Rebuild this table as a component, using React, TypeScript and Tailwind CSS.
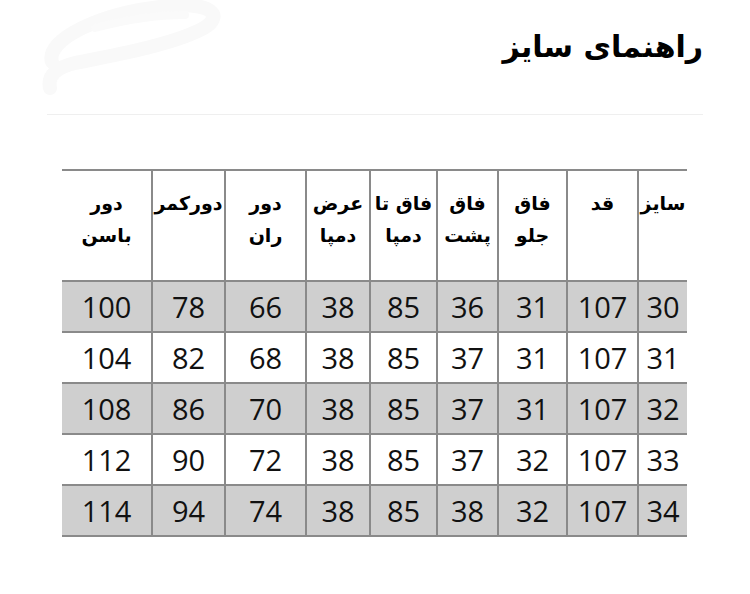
import React from 'react';

const headers = [
  ['سایز'],
  ['قد'],
  ['فاق', 'جلو'],
  ['فاق', 'پشت'],
  ['فاق تا', 'دمپا'],
  ['عرض', 'دمپا'],
  ['دور', 'ران'],
  ['دورکمر'],
  ['دور', 'باسن'],
];

const rows = [
  [30, 107, 31, 36, 85, 38, 66, 78, 100],
  [31, 107, 31, 37, 85, 38, 68, 82, 104],
  [32, 107, 31, 37, 85, 38, 70, 86, 108],
  [33, 107, 32, 37, 85, 38, 72, 90, 112],
  [34, 107, 32, 38, 85, 38, 74, 94, 114],
];

const cols = 'grid grid-cols-[50px_71px_69px_61px_67px_64px_81px_73px_89px]';

export default function App() {
  return (
    <div className="relative w-[750px] h-[594px] bg-white overflow-hidden">
      {/* faint watermark in the corner */}
      <svg className="absolute left-[20px] top-0" width="220" height="100" viewBox="0 0 220 100" fill="none">
        <path
          d="M32 62 C 25 40, 80 12, 150 6 C 195 2, 205 18, 180 30 C 150 45, 95 55, 55 63 C 38 67, 27 75, 30 88"
          stroke="#f9f9f9"
          strokeWidth="14"
          strokeLinecap="round"
        />
        <path d="M75 28 C 105 20, 140 15, 165 15" stroke="#fafafa" strokeWidth="8" strokeLinecap="round" />
      </svg>

      <div className="relative pt-[22px] px-[47px]" dir="rtl">
        <h1 className="text-[30px] font-bold text-black leading-[50px] font-['DejaVu_Sans',sans-serif]">
          راهنمای سایز
        </h1>
        <div className="mt-[42px] h-px bg-[#efefef]" />
      </div>

      <div className="mt-[54px] ml-[62px] w-[625px]" dir="rtl">
        <div className={`${cols} border-t-2 border-b-2 border-[#8a8a8a] h-[113px]`}>
          {headers.map((h, i) => (
            <div
              key={i}
              className={`pt-[16px] text-center text-[19px] font-bold leading-[32px] text-black whitespace-nowrap font-['DejaVu_Sans',sans-serif] ${
                i < headers.length - 1 ? 'border-l-2 border-[#8a8a8a]' : ''
              }`}
            >
              {h.map((line) => (
                <div key={line}>{line}</div>
              ))}
            </div>
          ))}
        </div>
        {rows.map((r, ri) => (
          <div
            key={ri}
            className={`${cols} border-b-2 border-[#8a8a8a] h-[51px] ${ri % 2 === 0 ? 'bg-[#cfcfcf]' : 'bg-white'}`}
          >
            {r.map((v, i) => (
              <div
                key={i}
                className={`flex items-center justify-center text-[29px] text-[#111] font-['Open_Sans',sans-serif] ${
                  i < r.length - 1 ? 'border-l-2 border-[#8a8a8a]' : ''
                }`}
              >
                {v}
              </div>
            ))}
          </div>
        ))}
      </div>
    </div>
  );
}
